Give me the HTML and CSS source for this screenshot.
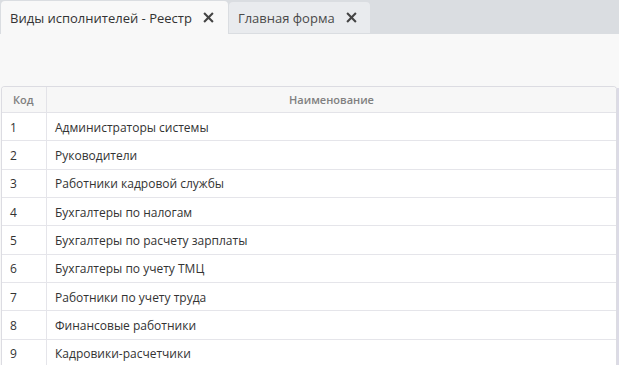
FILE: index.html
```html
<!DOCTYPE html>
<html lang="ru">
<head>
<meta charset="utf-8">
<link rel="stylesheet" href="styles.css">
</head>
<body>
<div class="tabbar">
  <div class="tab active"><span class="tab-title">Виды исполнителей - Реестр</span><svg class="x" viewBox="0 0 10 10"><path d="M1 1L9 9M9 1L1 9"/></svg></div>
  <div class="tab"><span class="tab-title">Главная форма</span><svg class="x" viewBox="0 0 10 10"><path d="M1 1L9 9M9 1L1 9"/></svg></div>
</div>
<div class="content">
  <div class="toolbar"></div>
  <div class="grid-wrap">
    <table class="grid">
      <thead>
        <tr><th class="c-code">Код</th><th class="c-name">Наименование</th></tr>
      </thead>
      <tbody>
        <tr><td>1</td><td>Администраторы системы</td></tr>
        <tr><td>2</td><td>Руководители</td></tr>
        <tr><td>3</td><td>Работники кадровой службы</td></tr>
        <tr><td>4</td><td>Бухгалтеры по налогам</td></tr>
        <tr><td>5</td><td>Бухгалтеры по расчету зарплаты</td></tr>
        <tr><td>6</td><td>Бухгалтеры по учету ТМЦ</td></tr>
        <tr><td>7</td><td>Работники по учету труда</td></tr>
        <tr><td>8</td><td>Финансовые работники</td></tr>
        <tr><td>9</td><td>Кадровики-расчетчики</td></tr>
      </tbody>
    </table>
    <div class="scroll"></div>
  </div>
</div>
</body>
</html>
```
FILE: styles.css
```css
html, body { margin: 0; padding: 0; }
body {
  width: 619px; height: 365px; overflow: hidden;
  background: #f8f8f8;
  font-family: "Open Sans", "Liberation Sans", sans-serif;
  font-size: 12px; color: #333;
}
.tabbar {
  display: flex; height: 34px; background: #dadde1;
  padding: 1px 0 0 1px; box-sizing: border-box; gap: 1px;
}
.tab {
  display: flex; align-items: center; gap: 11px;
  padding: 0 13px 0 9px; height: 31px; margin-top: 1px;
  background: #e9ebee; border-radius: 4px 4px 0 0;
  font-size: 13px; color: #4a4a4a;
}
.tab.active {
  background: #f8f8f8; height: 33px; margin-top: 0;
  padding-right: 14px; color: #333;
}
.x { width: 11px; height: 11px; }
.x path { stroke: #444; stroke-width: 1.9; fill: none; }
.toolbar { height: 52px; }
.grid-wrap { display: flex; padding-left: 1px; }
.grid {
  width: 616px; border-collapse: separate; border-spacing: 0;
  background: #fff; border: 1px solid #dcdce2; border-bottom: none;
  border-radius: 4px 4px 0 0; overflow: hidden;
}
.grid th {
  height: 25px; padding: 0 11px; background: #f7f7f7;
  font-size: 11px; font-weight: 600; color: #808080;
  border-bottom: 1px solid #e3e3e8;
}
.grid th.c-code { width: 22px; text-align: left; border-right: 1px solid #e3e3e8; }
.grid th.c-name { text-align: center; }
.grid td {
  height: 26px; padding: 1px 8px 0; border-bottom: 1px solid #e5e5ea;
  font-size: 12px; color: #333;
}
.grid td:first-child { border-right: 1px solid #e5e5ea; padding-left: 8px; }
.scroll { width: 2px; background: #dcdbe6; margin-top: 2px; height: 280px; }
```
